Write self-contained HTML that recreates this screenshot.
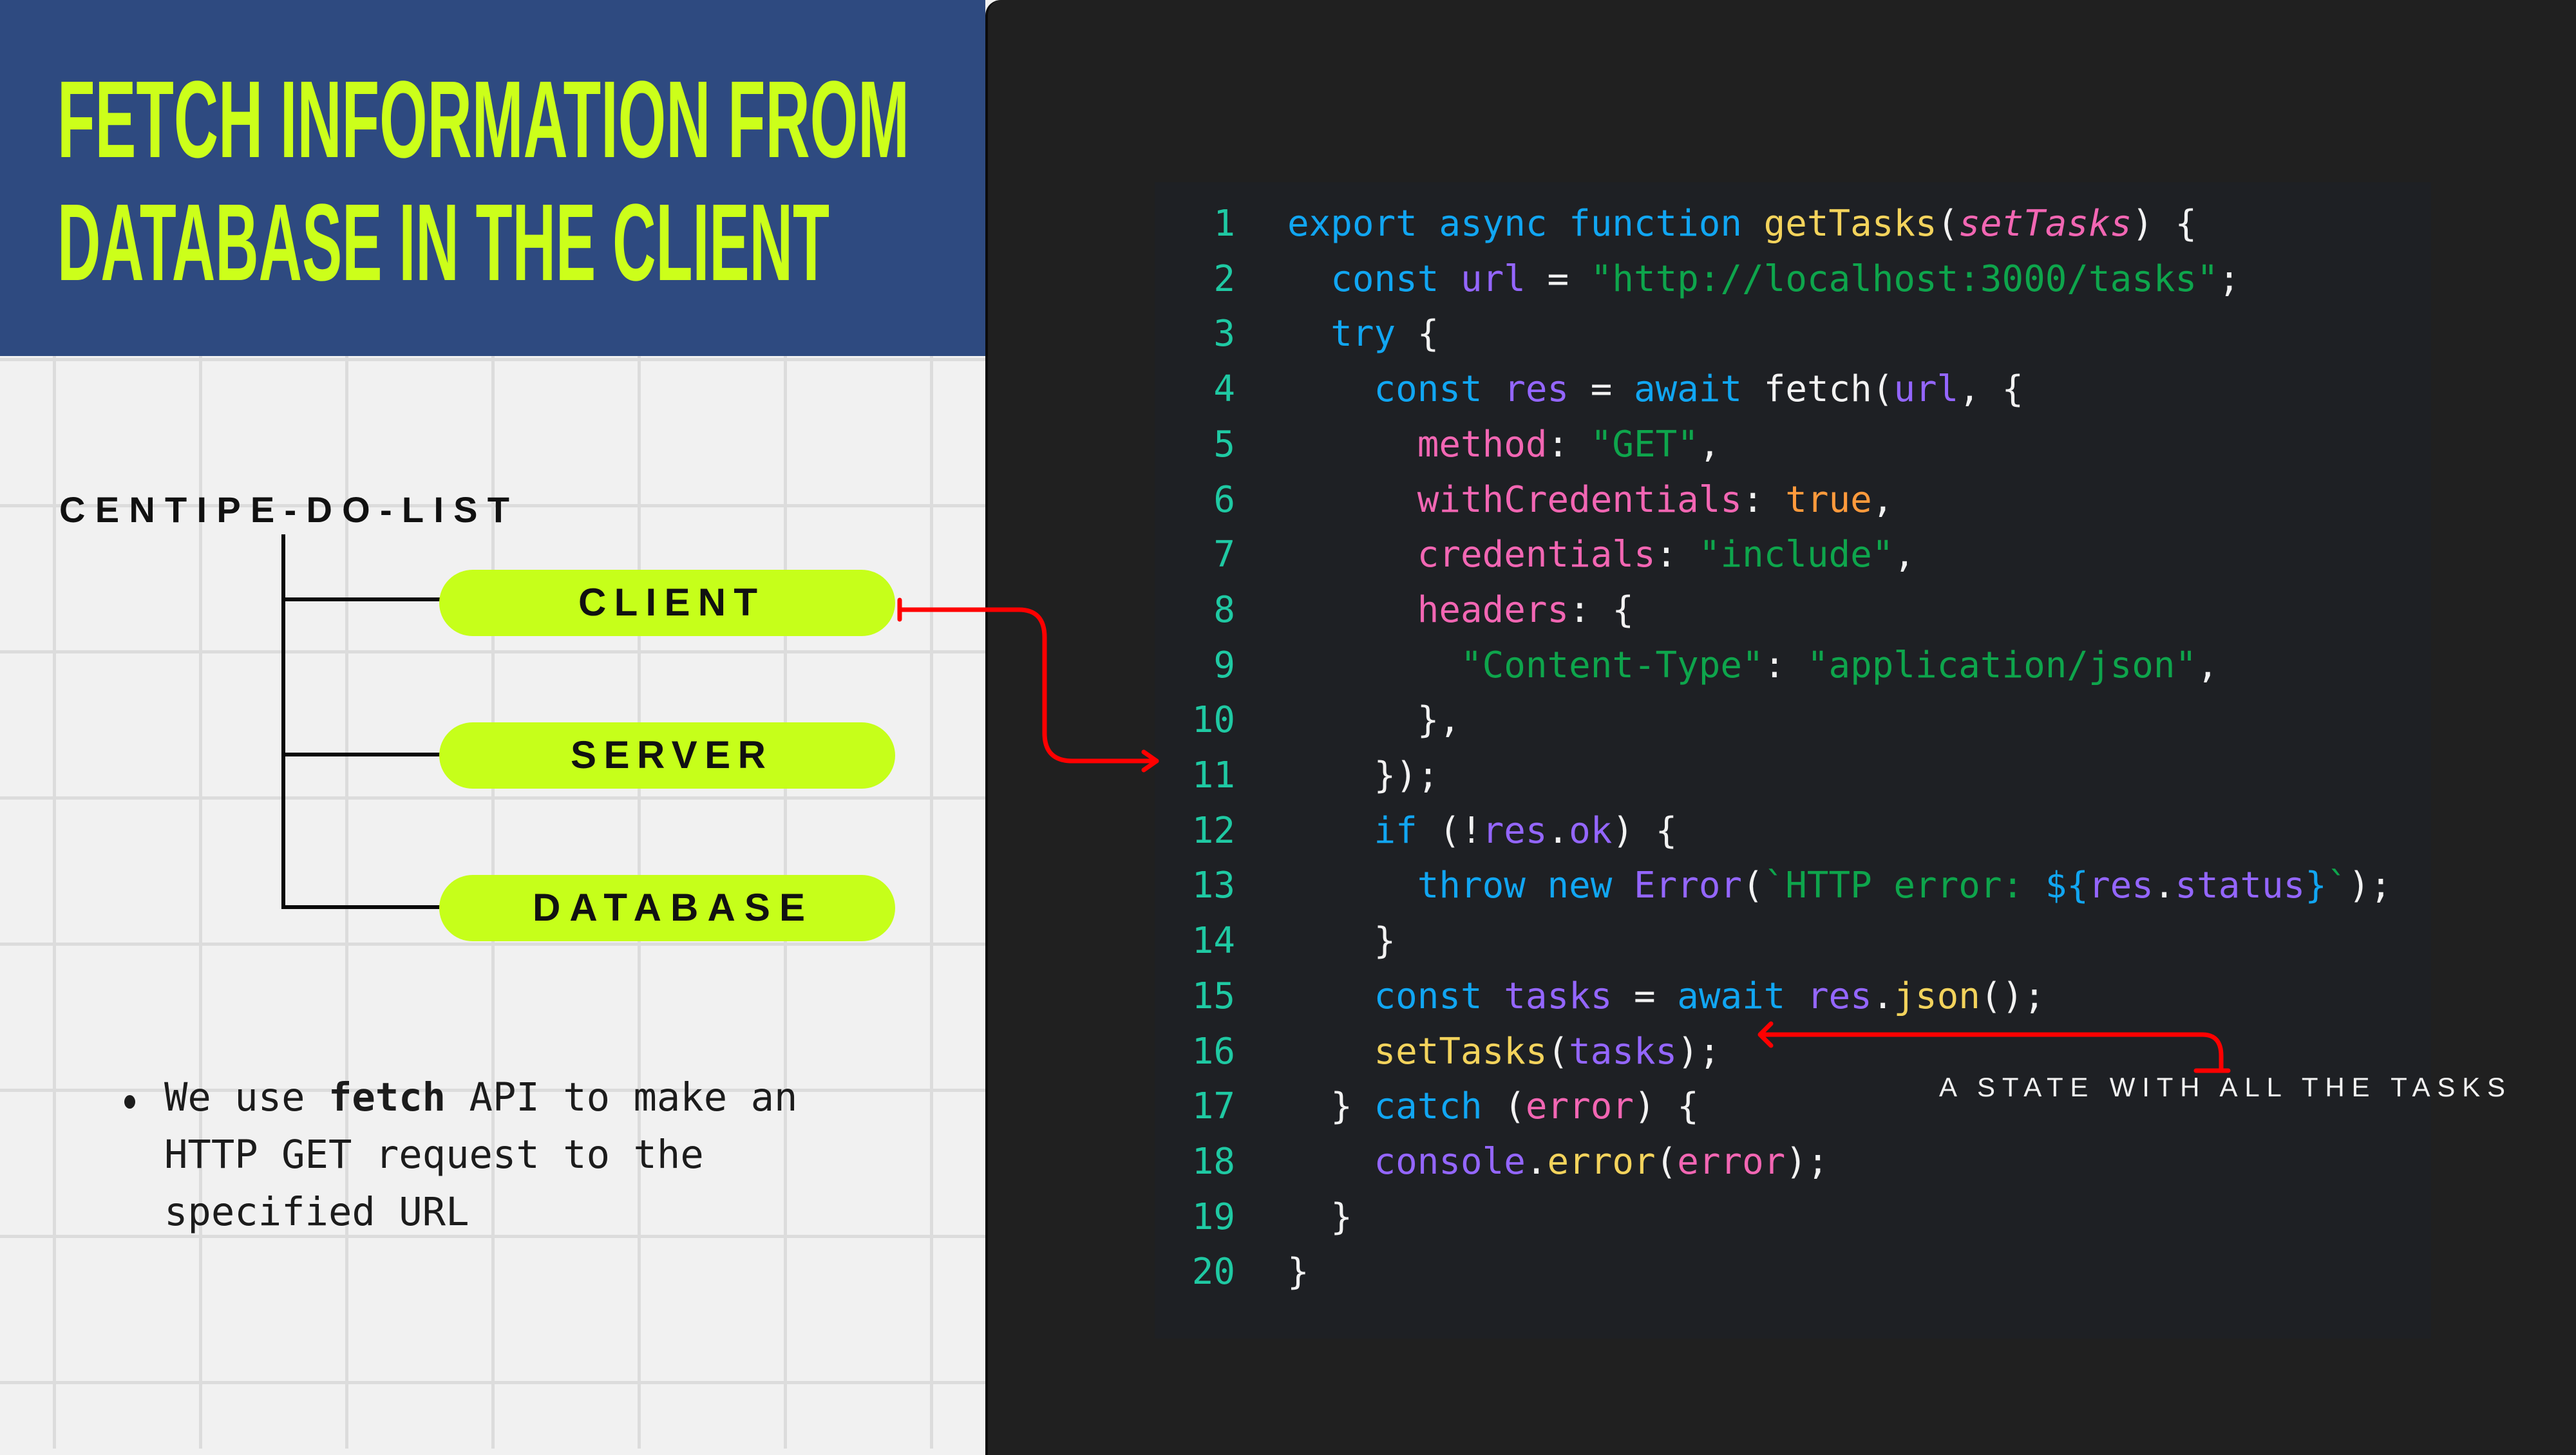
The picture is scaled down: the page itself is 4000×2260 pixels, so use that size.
<!DOCTYPE html>
<html><head><meta charset="utf-8">
<style>
html,body{margin:0;padding:0;}
body{width:4000px;height:2250px;position:relative;overflow:hidden;background:#f1f1f1;}
.grid{position:absolute;left:0;top:0;width:1530px;height:2250px;
 background-image:linear-gradient(to right,#dcdcdc 0,#dcdcdc 5px,transparent 5px),linear-gradient(to bottom,#dcdcdc 0,#dcdcdc 5px,transparent 5px);
 background-size:227px 227px;background-position:82px 556px;}
.head{position:absolute;left:0;top:0;width:1530px;height:553px;background:#2e4a80;}
.dark{position:absolute;left:1530px;top:0;width:2480px;height:2260px;background:#202020;border-left:4px solid #0b0b0b;border-top-left-radius:24px;box-sizing:border-box;}
.code{position:absolute;left:1793px;top:283px;width:1982px;height:1796px;background:#1e2024;}
.ln,.cd{position:absolute;top:305px;margin:0;font-family:"DejaVu Sans Mono","Liberation Mono",monospace;font-size:55.85px;line-height:85.7px;white-space:pre;}
.ln{left:1790px;width:128px;text-align:right;color:#1fc9a3;}
.cd{left:1999px;color:#f2f2f2;}
.k{color:#11a6f2}.v{color:#9466ff}.s{color:#0ea54c}.p{color:#f266b3}.f{color:#f3d35c}.o{color:#ff9a3c}.i{color:#f266b3;font-style:italic}
.bul{position:absolute;left:255px;top:1661px;font-family:"DejaVu Sans Mono","Liberation Mono",monospace;font-size:60.5px;line-height:89px;color:#1c1c1c;white-space:pre;}
.dot{position:absolute;left:193px;top:1701px;width:17px;height:21px;border-radius:50%;background:#1c1c1c;}
</style></head><body>
<div class="grid"></div>
<div class="head"></div>
<svg style="position:absolute;left:0;top:0" width="1530" height="553">
 <text x="89" y="244" font-family="Liberation Sans,sans-serif" font-weight="bold" font-size="170" fill="#ccff1a" textLength="1323" lengthAdjust="spacingAndGlyphs">FETCH INFORMATION FROM</text>
 <text x="89" y="435" font-family="Liberation Sans,sans-serif" font-weight="bold" font-size="170" fill="#ccff1a" textLength="1199" lengthAdjust="spacingAndGlyphs">DATABASE IN THE CLIENT</text>
</svg>
<div class="dark"></div>
<div class="code"></div>
<pre class="ln">1
2
3
4
5
6
7
8
9
10
11
12
13
14
15
16
17
18
19
20</pre>
<pre class="cd"><span class="k">export async function</span> <span class="f">getTasks</span>(<span class="i">setTasks</span>) {
  <span class="k">const</span> <span class="v">url</span> = <span class="s">"http://localhost:3000/tasks"</span>;
  <span class="k">try</span> {
    <span class="k">const</span> <span class="v">res</span> = <span class="k">await</span> fetch(<span class="v">url</span>, {
      <span class="p">method</span>: <span class="s">"GET"</span>,
      <span class="p">withCredentials</span>: <span class="o">true</span>,
      <span class="p">credentials</span>: <span class="s">"include"</span>,
      <span class="p">headers</span>: {
        <span class="s">"Content-Type"</span>: <span class="s">"application/json"</span>,
      },
    });
    <span class="k">if</span> (!<span class="v">res</span>.<span class="v">ok</span>) {
      <span class="k">throw new</span> <span class="v">Error</span>(<span class="s">`HTTP error: </span><span class="k">${</span><span class="v">res</span>.<span class="v">status</span><span class="k">}</span><span class="s">`</span>);
    }
    <span class="k">const</span> <span class="v">tasks</span> = <span class="k">await</span> <span class="v">res</span>.<span class="f">json</span>();
    <span class="f">setTasks</span>(<span class="v">tasks</span>);
  } <span class="k">catch</span> (<span class="p">error</span>) {
    <span class="v">console</span>.<span class="f">error</span>(<span class="p">error</span>);
  }
}</pre>
<svg style="position:absolute;left:0;top:0" width="4000" height="2250">
 <text x="92" y="811" font-family="Liberation Sans,sans-serif" font-weight="bold" font-size="56" fill="#111" textLength="699" lengthAdjust="spacing">CENTIPE-DO-LIST</text>
 <g stroke="#0a0a0a" stroke-width="6" fill="none">
  <line x1="440" y1="830" x2="440" y2="1412"/>
  <line x1="440" y1="931" x2="690" y2="931"/>
  <line x1="440" y1="1172" x2="690" y2="1172"/>
  <line x1="440" y1="1409" x2="690" y2="1409"/>
 </g>
 <g fill="#c6ff1a">
  <rect x="682" y="885" width="708" height="103" rx="52"/>
  <rect x="682" y="1122" width="708" height="103" rx="52"/>
  <rect x="682" y="1359" width="708" height="103" rx="52"/>
 </g>
 <g font-family="Liberation Sans,sans-serif" font-weight="bold" font-size="60" fill="#111">
  <text x="898" y="956" textLength="278" lengthAdjust="spacing">CLIENT</text>
  <text x="886" y="1193" textLength="303" lengthAdjust="spacing">SERVER</text>
  <text x="827" y="1430" textLength="423" lengthAdjust="spacing">DATABASE</text>
 </g>
 <g stroke="#f00" stroke-width="7" fill="none" stroke-linecap="round" stroke-linejoin="round">
  <line x1="1397" y1="932" x2="1397" y2="962"/>
  <path d="M1397 947 H1582 Q1622 947 1622 990 V1139 Q1622 1182 1665 1182 H1796"/>
  <path d="M1776 1168 L1796 1182 L1776 1196"/>
  <path d="M3410 1663 H3460"/>
  <path d="M3449 1663 V1640 Q3449 1607 3420 1607 H2735"/>
  <path d="M2750 1590 L2733 1607 L2750 1624"/>
 </g>
 <text x="3011" y="1703" font-family="Liberation Sans,sans-serif" font-size="42" fill="#f2f2f2" textLength="879" lengthAdjust="spacing">A STATE WITH ALL THE TASKS</text>
</svg>
<div class="dot"></div>
<div class="bul">We use <b>fetch</b> API to make an
HTTP GET request to the
specified URL</div>
</body></html>
